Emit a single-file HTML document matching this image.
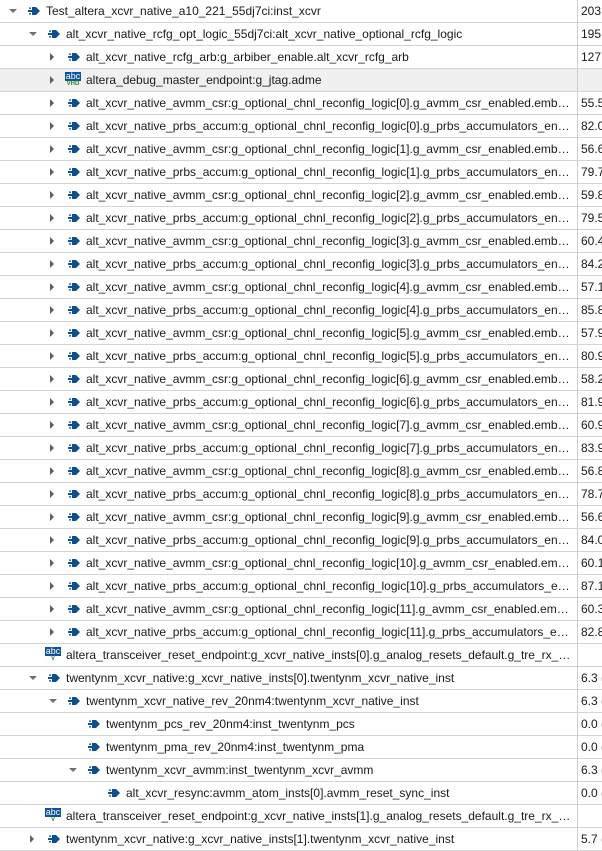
<!DOCTYPE html>
<html><head><meta charset="utf-8"><style>
body{margin:0;width:602px;height:841px;overflow:hidden;background:#fff;font-family:"Liberation Sans",sans-serif;font-size:12px;color:#1a1a1a}
.r{position:relative;height:22px;border-bottom:1px solid #d4d4d4;}
.r.g{background:#f0f0f0}
.c1{position:absolute;left:0;top:0;width:577px;height:22px;border-right:1px solid #cfcfcf}
.c2{position:absolute;left:581px;top:0;line-height:22px;width:21px;overflow:hidden;white-space:nowrap}
.t{position:absolute;top:0;line-height:22px;white-space:nowrap;overflow:hidden;text-overflow:ellipsis}
.ad,.ar{position:absolute;width:0;height:0}
.ad{top:9px;border-left:4px solid transparent;border-right:4px solid transparent;border-top:4px solid #707070}
.ar{top:7px;border-top:4px solid transparent;border-bottom:4px solid transparent;border-left:4px solid #606060}
.p{position:absolute;top:6px}
.abc{position:absolute;top:3px;width:16px;height:15px}
.abc b{display:block;background:#0d5196;color:#fff;font-size:9px;line-height:9px;height:9px;text-align:center;font-weight:normal}
.abc i{display:block;color:#2a8a2a;font-size:6px;line-height:6px;text-align:center;font-style:normal;font-weight:bold}
</style></head><body>
<div id="c"></div>
<script>
var P='<svg class="p" width="13" height="10" viewBox="0 0 13 10"><rect x="0" y="4" width="4" height="2" fill="#0d4e8e"/><rect x="1" y="1.5" width="2" height="1.3" fill="#0d4e8e"/><rect x="1" y="7.2" width="2" height="1.3" fill="#0d4e8e"/><path d="M4 1H8L12 5L8 9H4Z" fill="#0d4e8e"/></svg>';
var rows=[[0,'d','p','Test_altera_xcvr_native_a10_221_55dj7ci:inst_xcvr','203.7'],
[1,'d','p','alt_xcvr_native_rcfg_opt_logic_55dj7ci:alt_xcvr_native_optional_rcfg_logic','195.6'],
[2,'r','p','alt_xcvr_native_rcfg_arb:g_arbiber_enable.alt_xcvr_rcfg_arb','127.1'],
[2,'r','v','altera_debug_master_endpoint:g_jtag.adme','',1]];
var v=['55.5','82.0','56.6','79.7','59.8','79.5','60.4','84.2','57.1','85.8','57.9','80.9','58.2','81.9','60.9','83.9','56.8','78.7','56.6','84.0','60.1','87.1','60.3','82.8'];
for(var n=0;n<12;n++){rows.push([2,'r','p','alt_xcvr_native_avmm_csr:g_optional_chnl_reconfig_logic['+n+'].g_avmm_csr_enabled.embedded_debug',v[2*n]]);rows.push([2,'r','p','alt_xcvr_native_prbs_accum:g_optional_chnl_reconfig_logic['+n+'].g_prbs_accumulators_enable',v[2*n+1]]);}
rows=rows.concat([[1,'','u','altera_transceiver_reset_endpoint:g_xcvr_native_insts[0].g_analog_resets_default.g_tre_rx_endpoint',''],
[1,'d','p','twentynm_xcvr_native:g_xcvr_native_insts[0].twentynm_xcvr_native_inst','6.3 ('],
[2,'d','p','twentynm_xcvr_native_rev_20nm4:twentynm_xcvr_native_inst','6.3 ('],
[3,'','p','twentynm_pcs_rev_20nm4:inst_twentynm_pcs','0.0 ('],
[3,'','p','twentynm_pma_rev_20nm4:inst_twentynm_pma','0.0 ('],
[3,'d','p','twentynm_xcvr_avmm:inst_twentynm_xcvr_avmm','6.3 ('],
[4,'','p','alt_xcvr_resync:avmm_atom_insts[0].avmm_reset_sync_inst','0.0 ('],
[1,'','u','altera_transceiver_reset_endpoint:g_xcvr_native_insts[1].g_analog_resets_default.g_tre_rx_endpoint',''],
[1,'r','p','twentynm_xcvr_native:g_xcvr_native_insts[1].twentynm_xcvr_native_inst','5.7 (']]);
var h='';
rows.forEach(function(r){var b=r[0]*20,s='<div class="r'+(r[5]?' g':'')+'"><div class="c1">';
if(r[1]=='d')s+='<div class="ad" style="left:'+(b+9)+'px"></div>';
if(r[1]=='r')s+='<div class="ar" style="left:'+(b+10)+'px"></div>';
if(r[2]=='p')s+=P.replace('class="p"','class="p" style="left:'+(b+28)+'px"');
else s+='<div class="abc" style="left:'+(b+25)+'px"><b>abc</b><i>'+(r[2]=='v'?'VHD':'V')+'</i></div>';
s+='<div class="t" style="left:'+(b+46)+'px;width:'+(572-b-46)+'px">'+r[3]+'</div></div><div class="c2">'+r[4]+'</div></div>';h+=s;});
document.getElementById('c').innerHTML=h;
</script>
</body></html>
